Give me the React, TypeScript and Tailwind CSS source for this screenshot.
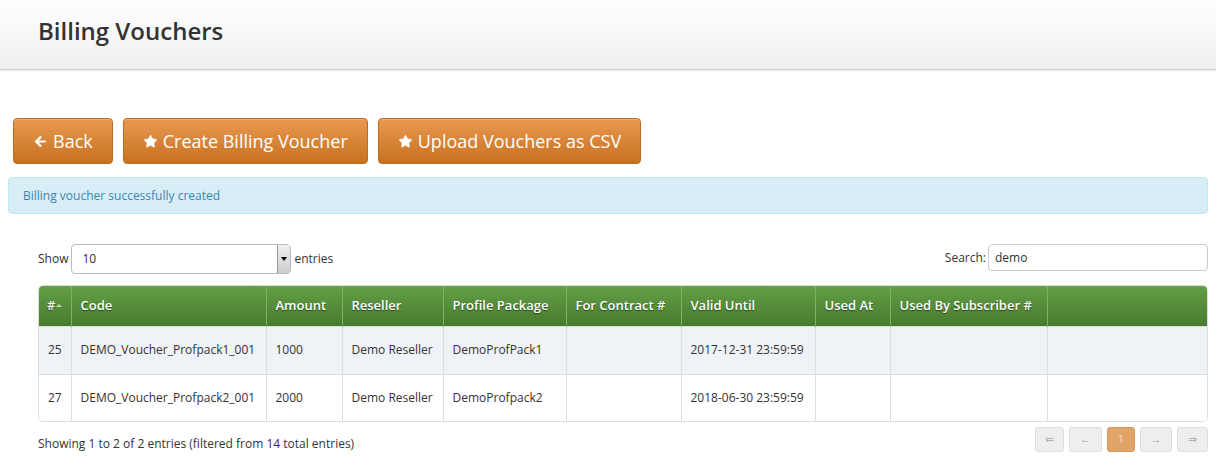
import { ArrowLeft, Star } from "lucide-react";

const cols = [
  { label: "#", w: 32 },
  { label: "Code", w: 195 },
  { label: "Amount", w: 76 },
  { label: "Reseller", w: 101 },
  { label: "Profile Package", w: 123 },
  { label: "For Contract #", w: 115 },
  { label: "Valid Until", w: 134 },
  { label: "Used At", w: 75 },
  { label: "Used By Subscriber #", w: 157 },
  { label: "", w: 160 },
];

const rows = [
  ["25", "DEMO_Voucher_Profpack1_001", "1000", "Demo Reseller", "DemoProfPack1", "", "2017-12-31 23:59:59", "", "", ""],
  ["27", "DEMO_Voucher_Profpack2_001", "2000", "Demo Reseller", "DemoProfpack2", "", "2018-06-30 23:59:59", "", "", ""],
];

function OrangeButton({ children }: { children: React.ReactNode }) {
  return (
    <button className="h-[46px] px-[19px] flex items-center gap-[5px] rounded-[4px] border border-[#c06a1c] bg-gradient-to-b from-[#e9994f] to-[#c7711f] text-white text-[18px] shadow-[inset_0_1px_0_rgba(255,255,255,0.2)]">
      {children}
    </button>
  );
}

export default function App() {
  return (
    <div className="w-[1216px] h-[464px] bg-white text-[#333] font-['Open_Sans',sans-serif] overflow-hidden">
      <div className="h-[70px] bg-gradient-to-b from-white to-[#efefef] border-b border-[#cfcfcf] shadow-[0_1px_2px_rgba(0,0,0,0.08)] flex items-center px-[38px] pb-[8px]">
        <h1 className="text-[24px] font-semibold text-[#333]">Billing Vouchers</h1>
      </div>

      <div className="px-[13px] pt-[48px] flex gap-[10px]">
        <OrangeButton>
          <ArrowLeft className="w-[15px] h-[15px]" strokeWidth={3.5} />
          Back
        </OrangeButton>
        <OrangeButton>
          <Star className="w-[15px] h-[15px] fill-white" strokeWidth={1} />
          Create Billing Voucher
        </OrangeButton>
        <OrangeButton>
          <Star className="w-[15px] h-[15px] fill-white" strokeWidth={1} />
          Upload Vouchers as CSV
        </OrangeButton>
      </div>

      <div className="mx-[8px] mt-[13px] h-[37px] rounded-[4px] border border-[#bce8f1] bg-[#d9edf7] text-[#3a87ad] text-[12px] flex items-center px-[14px]">
        Billing voucher successfully created
      </div>

      <div className="px-[38px] pr-[8px] mt-[30px]">
        <div className="flex items-center justify-between text-[12px]">
          <div className="flex items-center gap-[3px]">
            <span>Show</span>
            <div className="w-[220px] h-[30px] border border-[#bbb] rounded-[4px] flex items-center justify-between pl-[10px] bg-white">
              <span>10</span>
              <div className="w-[13px] h-[28px] bg-gradient-to-b from-[#eee] to-[#ccc] border-l border-[#999] flex items-center justify-center">
                <span className="border-x-[3px] border-x-transparent border-t-[4px] border-t-black"></span>
              </div>
            </div>
            <span>entries</span>
          </div>
          <div className="flex items-center gap-[2px] -mt-[3px]">
            <span>Search:</span>
            <div className="w-[220px] h-[27px] border border-[#ccc] rounded-[4px] flex items-center px-[6px] bg-white">demo</div>
          </div>
        </div>

        <div className="mt-[11px] border border-[#ddd] rounded-[5px] overflow-hidden">
          <table className="table-fixed w-full border-collapse">
            <colgroup>
              {cols.map((c, i) => (
                <col key={i} style={{ width: c.w }} />
              ))}
            </colgroup>
            <thead>
              <tr className="h-[40px] bg-gradient-to-b from-[#64a046] to-[#477a2f]">
                {cols.map((c, i) => (
                  <th
                    key={i}
                    className="text-left text-[13px] font-semibold text-white px-[9px] first:px-[8px] whitespace-nowrap border-l border-[#7cb35c] first:border-l-0 [text-shadow:0_1px_1px_rgba(0,0,0,0.5)]"
                  >
                    {c.label}
                    {i === 0 && <span className="inline-block ml-[1px] mb-[3px] align-middle border-x-[3px] border-x-transparent border-b-[3px] border-b-[#bcd6ad]"></span>}
                  </th>
                ))}
              </tr>
            </thead>
            <tbody>
              {rows.map((r, ri) => (
                <tr key={ri} className={ri === 0 ? "h-[48px] bg-[#eff2f7]" : "h-[47px] bg-white"}>
                  {r.map((v, ci) => (
                    <td key={ci} className="px-[9px] text-[12px] whitespace-nowrap border-l border-t border-[#ddd] first:border-l-0 text-[#333]">
                      {v}
                    </td>
                  ))}
                </tr>
              ))}
            </tbody>
          </table>
        </div>

        <div className="flex items-start justify-between mt-[5px] text-[12px]">
          <span className="mt-[8px]">Showing 1 to 2 of 2 entries (filtered from 14 total entries)</span>
          <div className="flex gap-[5px] text-[11px]">
            <div className="w-[29px] h-[25px] rounded-[3px] border border-[#ddd] bg-[#eee] text-[#aaa] flex items-center justify-center">⇐</div>
            <div className="w-[33px] h-[25px] rounded-[3px] border border-[#ddd] bg-[#eee] text-[#aaa] flex items-center justify-center">←</div>
            <div className="w-[28px] h-[25px] rounded-[3px] border border-[#d89a5c] bg-[#e0a469] text-[#f6dcc3] flex items-center justify-center">1</div>
            <div className="w-[32px] h-[25px] rounded-[3px] border border-[#ddd] bg-[#eee] text-[#aaa] flex items-center justify-center">→</div>
            <div className="w-[31px] h-[25px] rounded-[3px] border border-[#ddd] bg-[#eee] text-[#aaa] flex items-center justify-center">⇒</div>
          </div>
        </div>
      </div>
    </div>
  );
}
